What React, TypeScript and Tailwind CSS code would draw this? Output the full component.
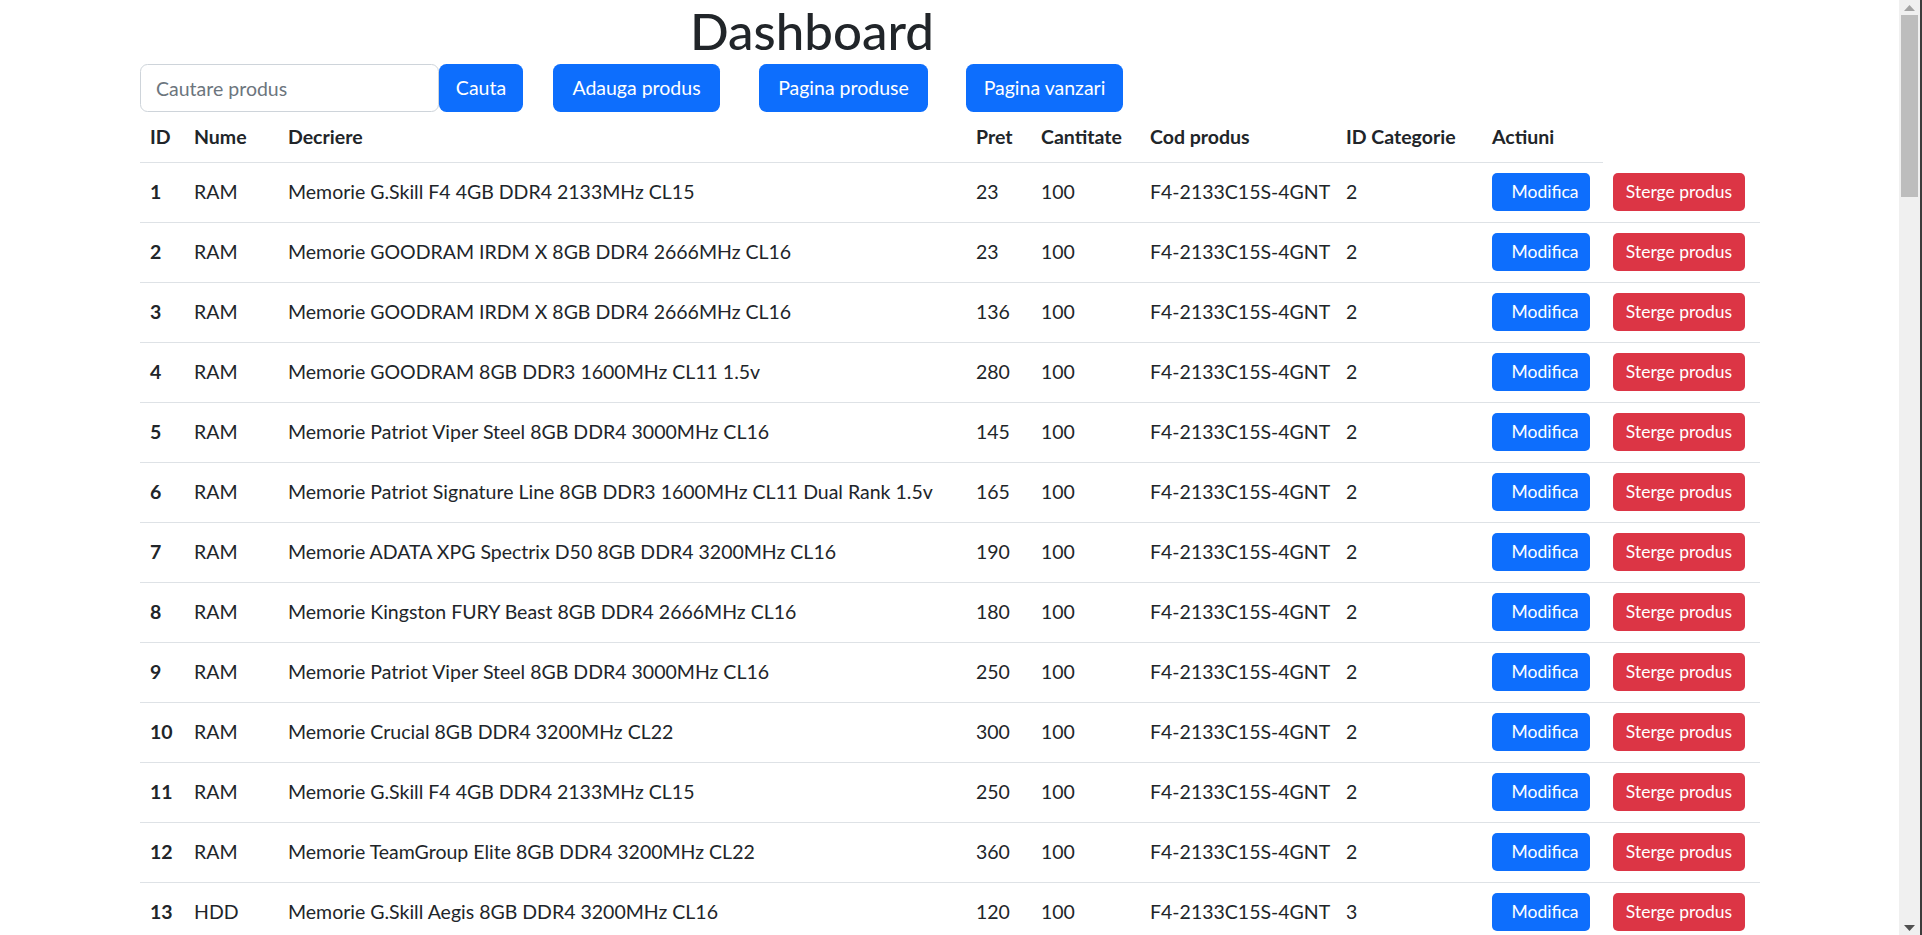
const products = [
  { id: 1, name: "RAM", desc: "Memorie G.Skill F4 4GB DDR4 2133MHz CL15", price: 23, cat: 2 },
  { id: 2, name: "RAM", desc: "Memorie GOODRAM IRDM X 8GB DDR4 2666MHz CL16", price: 23, cat: 2 },
  { id: 3, name: "RAM", desc: "Memorie GOODRAM IRDM X 8GB DDR4 2666MHz CL16", price: 136, cat: 2 },
  { id: 4, name: "RAM", desc: "Memorie GOODRAM 8GB DDR3 1600MHz CL11 1.5v", price: 280, cat: 2 },
  { id: 5, name: "RAM", desc: "Memorie Patriot Viper Steel 8GB DDR4 3000MHz CL16", price: 145, cat: 2 },
  { id: 6, name: "RAM", desc: "Memorie Patriot Signature Line 8GB DDR3 1600MHz CL11 Dual Rank 1.5v", price: 165, cat: 2 },
  { id: 7, name: "RAM", desc: "Memorie ADATA XPG Spectrix D50 8GB DDR4 3200MHz CL16", price: 190, cat: 2 },
  { id: 8, name: "RAM", desc: "Memorie Kingston FURY Beast 8GB DDR4 2666MHz CL16", price: 180, cat: 2 },
  { id: 9, name: "RAM", desc: "Memorie Patriot Viper Steel 8GB DDR4 3000MHz CL16", price: 250, cat: 2 },
  { id: 10, name: "RAM", desc: "Memorie Crucial 8GB DDR4 3200MHz CL22", price: 300, cat: 2 },
  { id: 11, name: "RAM", desc: "Memorie G.Skill F4 4GB DDR4 2133MHz CL15", price: 250, cat: 2 },
  { id: 12, name: "RAM", desc: "Memorie TeamGroup Elite 8GB DDR4 3200MHz CL22", price: 360, cat: 2 },
  { id: 13, name: "HDD", desc: "Memorie G.Skill Aegis 8GB DDR4 3200MHz CL16", price: 120, cat: 3 },
  { id: 14, name: "HDD", desc: "Memorie G.Skill Aegis 8GB DDR4 3200MHz CL16", price: 120, cat: 3 },
];

const headers = ["ID", "Nume", "Decriere", "Pret", "Cantitate", "Cod produs", "ID Categorie", "Actiuni"];

const td = "whitespace-nowrap px-[10px] py-0 border-b border-[#dee2e6] align-middle";

export default function App() {
  return (
    <div className="flex h-[935px] w-full overflow-hidden bg-white font-['Lato',sans-serif] text-[19.5px] leading-[1.5] text-[#212529]">
      <main className="min-w-0 flex-1 pl-[140px]">
        <h1 className="ml-[550px] h-[64px] text-[51px] font-medium leading-[62px]">Dashboard</h1>

        <div className="flex h-[47px] items-start">
          <input
            placeholder="Cautare produs"
            className="h-[48px] w-[299px] rounded-[7.5px] border border-[#ced4da] px-[15px] text-[19.5px] outline-none placeholder:text-[#6c757d]"
          />
          <button className="h-[48px] w-[84px] rounded-[7.5px] bg-[#0d6efd] text-white">Cauta</button>
          <button className="ml-[30px] h-[48px] w-[167px] rounded-[7.5px] bg-[#0d6efd] text-white">Adauga produs</button>
          <button className="ml-[39px] h-[48px] w-[169px] rounded-[7.5px] bg-[#0d6efd] text-white">Pagina produse</button>
          <button className="ml-[38px] h-[48px] w-[157px] rounded-[7.5px] bg-[#0d6efd] text-white">Pagina vanzari</button>
        </div>

        <table className="w-[1620px] table-fixed border-collapse">
          <colgroup>
            <col className="w-[44px]" />
            <col className="w-[94px]" />
            <col className="w-[688px]" />
            <col className="w-[65px]" />
            <col className="w-[109px]" />
            <col className="w-[196px]" />
            <col className="w-[146px]" />
            <col className="w-[121px]" />
            <col className="w-[157px]" />
          </colgroup>
          <thead>
            <tr className="h-[51px]">
              {headers.map((h) => (
                <th key={h} className={`${td} text-left font-bold`}>
                  {h}
                </th>
              ))}
            </tr>
          </thead>
          <tbody>
            {products.map((p) => (
              <tr key={p.id} className="h-[60px]">
                <th className={`${td} text-left font-bold`}>{p.id}</th>
                <td className={td}>{p.name}</td>
                <td className={td}>{p.desc}</td>
                <td className={td}>{p.price}</td>
                <td className={td}>100</td>
                <td className={td}>F4-2133C15S-4GNT</td>
                <td className={td}>{p.cat}</td>
                <td className={td}>
                  <button className="block h-[38px] w-[98px] rounded-[5px] bg-[#0d6efd] pl-[8px] text-[17.5px] text-white">Modifica</button>
                </td>
                <td className={td}>
                  <button className="block h-[38px] w-[132px] rounded-[5px] bg-[#dc3545] text-[17.5px] text-white">Sterge produs</button>
                </td>
              </tr>
            ))}
          </tbody>
        </table>
      </main>

      <div className="flex w-[23px] shrink-0">
        <div className="flex w-[21px] flex-col items-center bg-[#f0f0f0]">
          <div className="flex h-[15px] items-center justify-center">
            <svg width="11" height="6" viewBox="0 0 11 6"><path d="M5.5 0L11 6H0z" fill="#a3a3a3" /></svg>
          </div>
          <div className="h-[182px] w-[17px] bg-[#bdbdbd]" />
          <div className="flex-1" />
          <div className="flex h-[15px] items-center justify-center">
            <svg width="11" height="6" viewBox="0 0 11 6"><path d="M0 0H11L5.5 6z" fill="#505050" /></svg>
          </div>
        </div>
        <div className="w-[2px] bg-[#3c3c3c]" />
      </div>
    </div>
  );
}
